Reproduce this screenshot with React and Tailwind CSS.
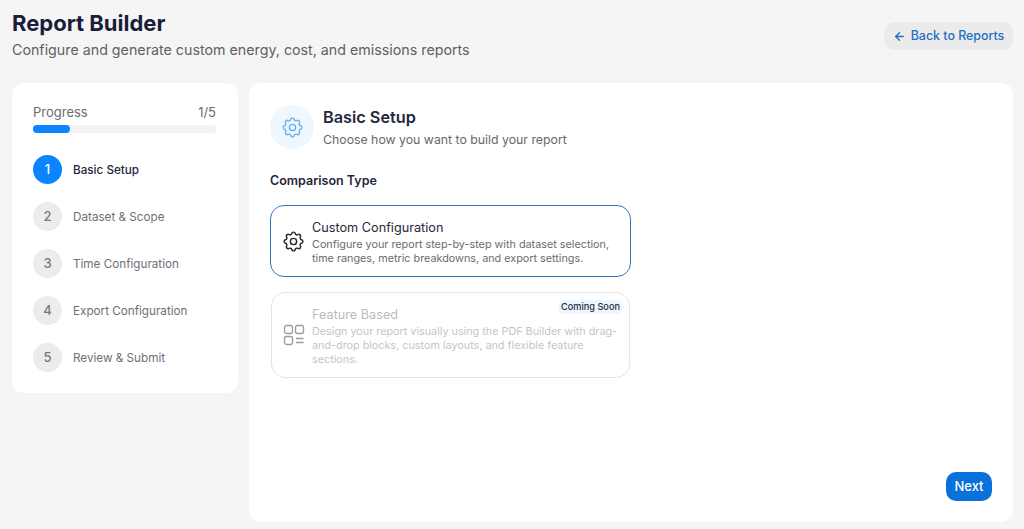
import { ArrowLeft } from "lucide-react";
import { TbSettings } from "react-icons/tb";

const font = "font-['Inter','Noto_Sans',sans-serif]";

const steps = ["Basic Setup", "Dataset & Scope", "Time Configuration", "Export Configuration", "Review & Submit"];

function LayoutIcon() {
  return (
    <svg width="22" height="22" viewBox="0 0 22 22" fill="none" stroke="currentColor" strokeWidth="1.3" className="shrink-0">
      <rect x="1.5" y="1.5" width="8" height="8" rx="2" />
      <rect x="12.5" y="1.5" width="8" height="8" rx="2" />
      <rect x="1.5" y="12.5" width="8" height="8" rx="2" />
      <path d="M13 14.5h7.5M13 18.5h7.5" />
    </svg>
  );
}

function Stepper() {
  return (
    <aside className="h-[310px] w-[226px] shrink-0 rounded-xl bg-white pt-[21px] pr-[22px] pl-[21px]">
      <div className="flex justify-between text-[13px] leading-[16px] text-[#6b6b70]">
        <span>Progress</span>
        <span>1/5</span>
      </div>
      <div className="mt-[5px] h-[8px] rounded-full bg-[#f3f3f3]">
        <div className="h-full w-[37px] rounded-full bg-[#0a84ff]" />
      </div>
      <ul className="mt-[22px] flex flex-col gap-[18px]">
        {steps.map((label, i) => (
          <li key={label} className="flex items-center gap-[11px]">
            <span className={i === 0
              ? "flex h-[29px] w-[29px] items-center justify-center rounded-full bg-[#0a84ff] text-[13px] font-medium text-white"
              : "flex h-[29px] w-[29px] items-center justify-center rounded-full bg-[#ececec] text-[13px] font-medium text-[#77777c]"}>
              {i + 1}
            </span>
            <span className={i === 0 ? "pt-[2px] text-[11.7px] font-medium text-[#24263a]" : "pt-[2px] text-[11.7px] font-normal text-[#6f6f77]"}>{label}</span>
          </li>
        ))}
      </ul>
    </aside>
  );
}

export default function App() {
  return (
    <div className={`${font} flex h-[529px] w-full flex-col overflow-hidden bg-[#f5f5f5] px-[11px] pt-[10px] pb-[7px]`}>
      <header className="flex h-[73px] shrink-0 items-start justify-between pl-px">
        <div>
          <h1 className="text-[22px] leading-[27px] font-bold text-[#1a1d3a]">Report Builder</h1>
          <p className="mt-[1px] text-[14.25px] leading-[24px] text-[#5f6068]">Configure and generate custom energy, cost, and emissions reports</p>
        </div>
        <button className="mt-[12px] flex h-[28px] w-[129px] items-center justify-center gap-[5px] rounded-[10px] bg-[#ebebeb] text-[12.4px] font-medium text-[#1f6fc4]">
          <ArrowLeft size={13} strokeWidth={2.4} />
          Back to Reports
        </button>
      </header>

      <div className="flex min-h-0 flex-1 items-start gap-[11px] pl-px">
        <Stepper />

        <main className="relative h-[439px] flex-1 rounded-xl bg-white px-[21px] pt-[21px]">
          <div className="flex items-center gap-[9px]">
            <div className="flex h-[44px] w-[44px] items-center justify-center rounded-full bg-[#eef6fe] text-[#6cb2f2]">
              <TbSettings size={25} strokeWidth={1.4} />
            </div>
            <div className="pt-[2px]">
              <h2 className="text-[16.3px] leading-[22px] font-semibold text-[#26283a]">Basic Setup</h2>
              <p className="mt-[2px] text-[12.3px] leading-[20px] text-[#66676e]">Choose how you want to build your report</p>
            </div>
          </div>

          <h3 className="mt-[21px] text-[12.5px] leading-[20px] font-semibold text-[#26283a]">Comparison Type</h3>

          <div className="mt-[14px] flex w-[361px] flex-col gap-[15px]">
            <div className="flex h-[72px] items-center gap-[6px] rounded-[14px] border border-[#2f78c4] bg-white px-[10px]">
              <TbSettings size={25} strokeWidth={1.4} className="shrink-0 text-[#26262c]" />
              <div className="pt-[2px]">
                <div className="text-[12.7px] leading-[18px] font-normal text-[#26283a]">Custom Configuration</div>
                <p className="mt-[1px] text-[10.8px] leading-[14px] text-[#6a6b72]">Configure your report step-by-step with dataset selection, time ranges, metric breakdowns, and export settings.</p>
              </div>
            </div>

            <div className="relative mx-px flex h-[86px] items-center gap-[7px] rounded-[14px] border border-[#e4e4e4] bg-white pr-[10px] pl-[11px]">
              <span className="text-[#9c9ca0]"><LayoutIcon /></span>
              <div className="pt-[2px] opacity-40">
                <div className="text-[12.7px] leading-[18px] font-normal text-[#55565e]">Feature Based</div>
                <p className="mt-[1px] text-[10.8px] leading-[14px] text-[#6a6b72]">Design your report visually using the PDF Builder with drag-and-drop blocks, custom layouts, and flexible feature sections.</p>
              </div>
              <span className="absolute top-[7px] right-[6px] rounded-full bg-[#eef6fe] px-[3px] text-[9.2px] leading-[14px] font-medium text-[#2a2c3e]">Coming Soon</span>
            </div>
          </div>

          <button className="absolute right-[21px] bottom-[21px] h-[29px] w-[46px] rounded-[10px] bg-[#0871dc] text-[13px] font-medium text-white">Next</button>
        </main>
      </div>
    </div>
  );
}
